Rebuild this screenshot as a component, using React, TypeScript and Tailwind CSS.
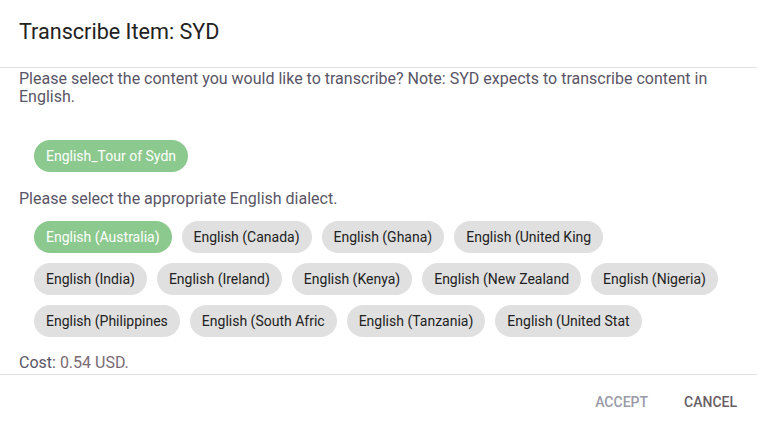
const sources = ["English_Tour of Sydn"];

const dialects = [
  "English (Australia)",
  "English (Canada)",
  "English (Ghana)",
  "English (United King",
  "English (India)",
  "English (Ireland)",
  "English (Kenya)",
  "English (New Zealand",
  "English (Nigeria)",
  "English (Philippines",
  "English (South Afric",
  "English (Tanzania)",
  "English (United Stat",
];

function Chip({ label, selected }: { label: string; selected?: boolean }) {
  return (
    <div
      className={
        "m-[5px] h-8 px-3 rounded-full flex items-center text-[14px] whitespace-nowrap " +
        (selected ? "bg-[#8cc98e] text-white" : "bg-[#e0e0e0] text-[#222222]")
      }
    >
      {label}
    </div>
  );
}

export default function App() {
  return (
    <div className="w-[757px] h-[422px] bg-white font-['Roboto',sans-serif] flex flex-col">
      <div className="h-[68px] border-b border-[#e0e0e0] px-[19px] flex items-center">
        <h2 className="text-[21.6px] text-[#222222] leading-8 -mt-1">Transcribe Item: SYD</h2>
      </div>

      <div className="px-[19px] pt-[2px] text-[16px] leading-[18px] text-[#5a5566]">
        <p>
          Please select the content you would like to transcribe? Note: SYD expects to transcribe content in
          English.
        </p>

        <div className="flex flex-wrap px-[10px] mt-[29px]">
          {sources.map((s) => (
            <Chip key={s} label={s} selected />
          ))}
        </div>

        <p className="mt-[13px]">Please select the appropriate English dialect.</p>

        <div className="flex flex-wrap px-[10px] mt-[8px]">
          {dialects.map((d, i) => (
            <Chip key={d} label={d} selected={i === 0} />
          ))}
        </div>

        <p className="mt-[12px]">
          Cost: <span className="text-[#7a6a72]">0.54 USD.</span>
        </p>
      </div>

      <div className="mt-[2px] pt-[8px] border-t border-[#e0e0e0] flex-1 flex items-center justify-end gap-[36px] pr-[20px] text-[14px] font-medium">
        <button className="uppercase text-[#9a9aa8]">Accept</button>
        <button className="uppercase text-[#6a5e66]">Cancel</button>
      </div>
    </div>
  );
}
